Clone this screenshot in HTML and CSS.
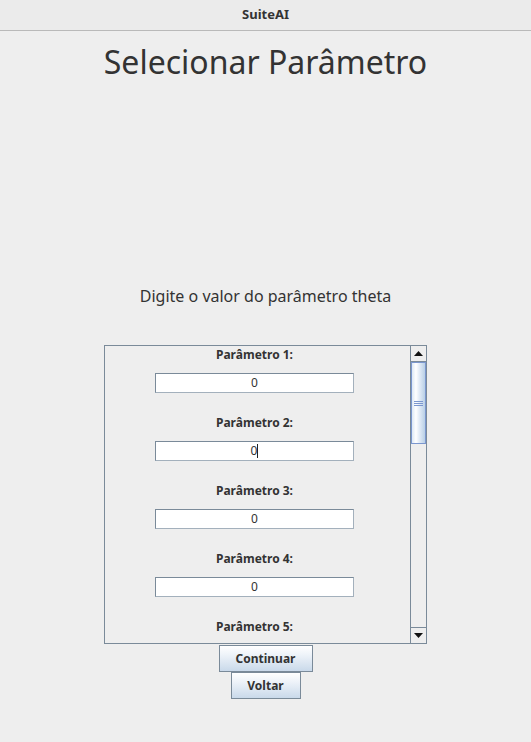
FILE: index.html
```html
<!DOCTYPE html>
<html lang="pt">
<head>
<meta charset="utf-8">
<title>SuiteAI</title>
<link rel="stylesheet" href="styles.css">
</head>
<body>
<header class="titlebar">SuiteAI</header>
<main class="content">
  <h1 class="title">Selecionar Parâmetro</h1>
  <p class="prompt">Digite o valor do parâmetro theta</p>
  <div class="pane">
    <div class="viewport">
      <div class="param">
        <div class="label">Parâmetro 1:</div>
        <div class="field">0</div>
      </div>
      <div class="param">
        <div class="label">Parâmetro 2:</div>
        <div class="field">0<span class="caret"></span></div>
      </div>
      <div class="param">
        <div class="label">Parâmetro 3:</div>
        <div class="field">0</div>
      </div>
      <div class="param">
        <div class="label">Parâmetro 4:</div>
        <div class="field">0</div>
      </div>
      <div class="param">
        <div class="label">Parâmetro 5:</div>
      </div>
    </div>
    <div class="scrollbar">
      <div class="arrow">
        <svg width="9" height="5" viewBox="0 0 9 5"><path d="M0 5 L4.5 0 L9 5 Z" fill="#111"/></svg>
      </div>
      <div class="thumb">
        <span class="grip"></span><span class="grip"></span><span class="grip"></span>
      </div>
      <div class="track"></div>
      <div class="arrow down">
        <svg width="9" height="5" viewBox="0 0 9 5"><path d="M0 0 L9 0 L4.5 5 Z" fill="#111"/></svg>
      </div>
    </div>
  </div>
  <div class="buttons">
    <button class="btn btn-continue">Continuar</button>
    <button class="btn btn-back">Voltar</button>
  </div>
</main>
</body>
</html>
```
FILE: styles.css
```css
html, body {
  margin: 0;
  padding: 0;
  background: #eeeeee;
  font-family: "Noto Sans", "Open Sans", sans-serif;
  color: #333333;
}
body {
  width: 531px;
  height: 742px;
  overflow: hidden;
}
.titlebar {
  height: 30px;
  line-height: 28px;
  background: #ebebeb;
  border-bottom: 1px solid #b9b9b9;
  text-align: center;
  font-size: 13px;
  font-weight: bold;
  color: #333;
}
.content {
  display: flex;
  flex-direction: column;
  align-items: center;
}
.title {
  margin: 9px 0 0 0;
  font-size: 32px;
  font-weight: normal;
  line-height: 44px;
  color: #333;
}
.prompt {
  margin: 201px 0 0 0;
  font-size: 16px;
  line-height: 22px;
  color: #333;
}
.pane {
  margin-top: 38px;
  width: 321px;
  height: 297px;
  border: 1px solid #7a8a99;
  display: flex;
  background: #eeeeee;
}
.viewport {
  flex: 1;
  overflow: hidden;
  display: flex;
  flex-direction: column;
  align-items: center;
  padding-right: 6px;
}
.param {
  display: flex;
  flex-direction: column;
  align-items: center;
  flex: none;
}
.label {
  height: 17px;
  line-height: 17px;
  font-size: 12px;
  font-weight: bold;
  color: #333;
}
.field {
  position: relative;
  margin-top: 10px;
  margin-bottom: 21px;
  width: 197px;
  height: 18px;
  line-height: 18px;
  background: #ffffff;
  border: 1px solid #7a8a99;
  border-right-color: #a3b0bc;
  border-bottom-color: #a3b0bc;
  text-align: center;
  font-size: 12px;
  color: #333;
}
.caret {
  display: inline-block;
  width: 1px;
  height: 14px;
  background: #222;
  vertical-align: -3px;
}
.scrollbar {
  width: 15px;
  border-left: 1px solid #7a8a99;
  display: flex;
  flex-direction: column;
  background: #eeeeee;
}
.arrow {
  display: flex;
  align-items: center;
  justify-content: center;
  background: #eeeeee;
  border-bottom: 1px solid #7a8a99;
  box-sizing: border-box;
  height: 16px;
}
.arrow.down {
  border-bottom: none;
  border-top: 1px solid #7a8a99;
}
.thumb {
  height: 82px;
  box-sizing: border-box;
  border: 1px solid #7b97cf;
  background: linear-gradient(to right, #dce8f5 0%, #ffffff 30%, #dfe9f5 60%, #b8cfe6 100%);
  display: flex;
  flex-direction: column;
  align-items: center;
  justify-content: center;
  gap: 1px;
}
.grip {
  display: block;
  width: 9px;
  height: 1px;
  background: #7b97cf;
}
.track {
  flex: 1;
}
.buttons {
  display: flex;
  flex-direction: column;
  align-items: center;
}
.btn {
  font-family: "Noto Sans", "Open Sans", sans-serif;
  font-size: 12px;
  font-weight: bold;
  line-height: 16px;
  color: #333;
  height: 27px;
  padding: 0;
  border: 1px solid #7a8a99;
  background: linear-gradient(to bottom, #ffffff 0%, #eef3f9 35%, #c9d9ea 100%);
  border-radius: 0;
}
.btn-continue {
  margin-top: 1px;
  width: 94px;
}
.btn-back {
  width: 70px;
}
```
